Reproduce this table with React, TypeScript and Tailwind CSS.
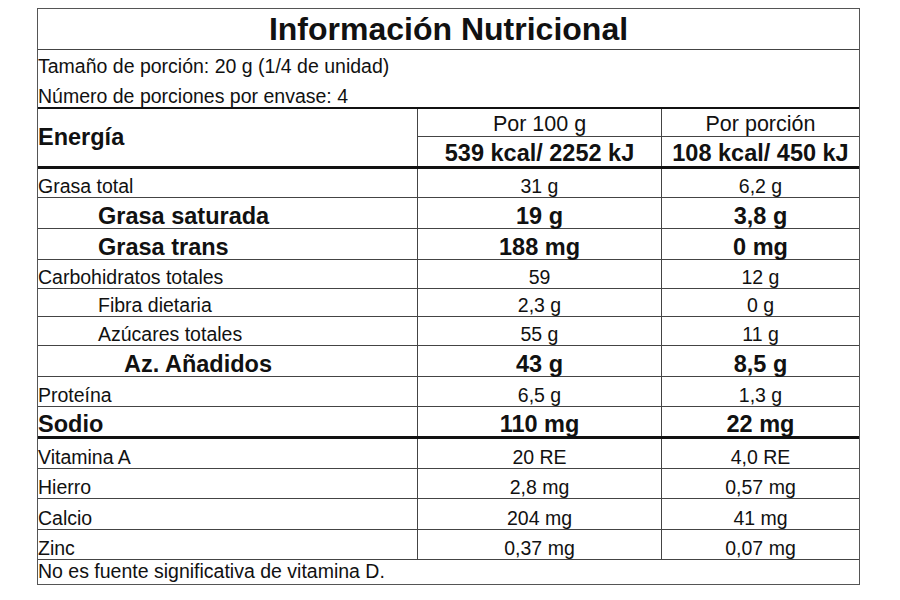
import React from "react";

type Row = {
  label: string;
  a: string;
  b: string;
  bold?: boolean;
  indent?: string;
  h: string;
  thick?: boolean;
};

const rows: Row[] = [
  { label: "Grasa total", a: "31 g", b: "6,2 g", h: "h-[29px]" },
  { label: "Grasa saturada", a: "19 g", b: "3,8 g", bold: true, indent: "pl-[60px]", h: "h-[31px]" },
  { label: "Grasa trans", a: "188 mg", b: "0 mg", bold: true, indent: "pl-[60px]", h: "h-[31px]" },
  { label: "Carbohidratos totales", a: "59", b: "12 g", h: "h-[29px]" },
  { label: "Fibra dietaria", a: "2,3 g", b: "0 g", indent: "pl-[60px]", h: "h-[28px]" },
  { label: "Azúcares totales", a: "55 g", b: "11 g", indent: "pl-[60px]", h: "h-[29px]" },
  { label: "Az. Añadidos", a: "43 g", b: "8,5 g", bold: true, indent: "pl-[86px]", h: "h-[31px]" },
  { label: "Proteína", a: "6,5 g", b: "1,3 g", h: "h-[30px]" },
  { label: "Sodio", a: "110 mg", b: "22 mg", bold: true, h: "h-[32px]", thick: true },
  { label: "Vitamina A", a: "20 RE", b: "4,0 RE", h: "h-[30px]" },
  { label: "Hierro", a: "2,8 mg", b: "0,57 mg", h: "h-[30px]" },
  { label: "Calcio", a: "204 mg", b: "41 mg", h: "h-[31px]" },
  { label: "Zinc", a: "0,37 mg", b: "0,07 mg", h: "h-[30px]" },
];

export default function App() {
  return (
    <div className="w-[900px] h-[600px] bg-white text-[#111] font-['Liberation_Sans',Arial,sans-serif] pt-[8px] pl-[37px]">
      <div className="w-[823px] border border-[#555]">
        {/* Title */}
        <div className="h-[41px] border-b border-[#444] flex items-end justify-center pb-[4px]">
          <span className="text-[32px] font-bold leading-none">Información Nutricional</span>
        </div>
        {/* Serving */}
        <div className="h-[59px] border-b-2 border-[#111] flex flex-col justify-end pb-[1px] gap-[10px] text-[19.5px] leading-none">
          <div>Tamaño de porción: 20 g (1/4 de unidad)</div>
          <div>Número de porciones por envase: 4</div>
        </div>
        {/* Energy header */}
        <div className="h-[60px] border-b-[3px] border-[#111] grid grid-cols-[379px_244px_198px]">
          <div className="flex items-center">
            <span className="text-[23.5px] font-bold leading-none">Energía</span>
          </div>
          <div className="border-l border-[#444] flex flex-col">
            <div className="h-[28px] border-b border-[#444] flex items-end justify-center pb-[1px] text-[21.5px] leading-none">
              Por 100 g
            </div>
            <div className="flex-1 flex items-end justify-center pb-[1px] text-[23.5px] font-bold leading-none">
              539 kcal/ 2252 kJ
            </div>
          </div>
          <div className="border-l border-[#444] flex flex-col">
            <div className="h-[28px] border-b border-[#444] flex items-end justify-center pb-[1px] text-[21.5px] leading-none">
              Por porción
            </div>
            <div className="flex-1 flex items-end justify-center pb-[1px] text-[23.5px] font-bold leading-none">
              108 kcal/ 450 kJ
            </div>
          </div>
        </div>
        {/* Nutrient rows */}
        {rows.map((r) => (
          <div
            key={r.label}
            className={`grid grid-cols-[379px_244px_198px] ${r.h} ${
              r.thick ? "border-b-[3px] border-[#111]" : "border-b border-[#444]"
            } ${r.bold ? "text-[23.5px] font-bold" : "text-[19.5px]"} leading-none`}
          >
            <div className={`flex items-end ${r.bold ? "pb-0" : "pb-[1px]"} ${r.indent ?? ""}`}>{r.label}</div>
            <div className={`border-l border-[#444] flex items-end justify-center ${r.bold ? "pb-0" : "pb-[1px]"}`}>{r.a}</div>
            <div className={`border-l border-[#444] flex items-end justify-center ${r.bold ? "pb-0" : "pb-[1px]"}`}>{r.b}</div>
          </div>
        ))}
        {/* Footer */}
        <div className="h-[24px] flex items-end pb-[3px] text-[19.5px] leading-none">
          No es fuente significativa de vitamina D.
        </div>
      </div>
    </div>
  );
}
